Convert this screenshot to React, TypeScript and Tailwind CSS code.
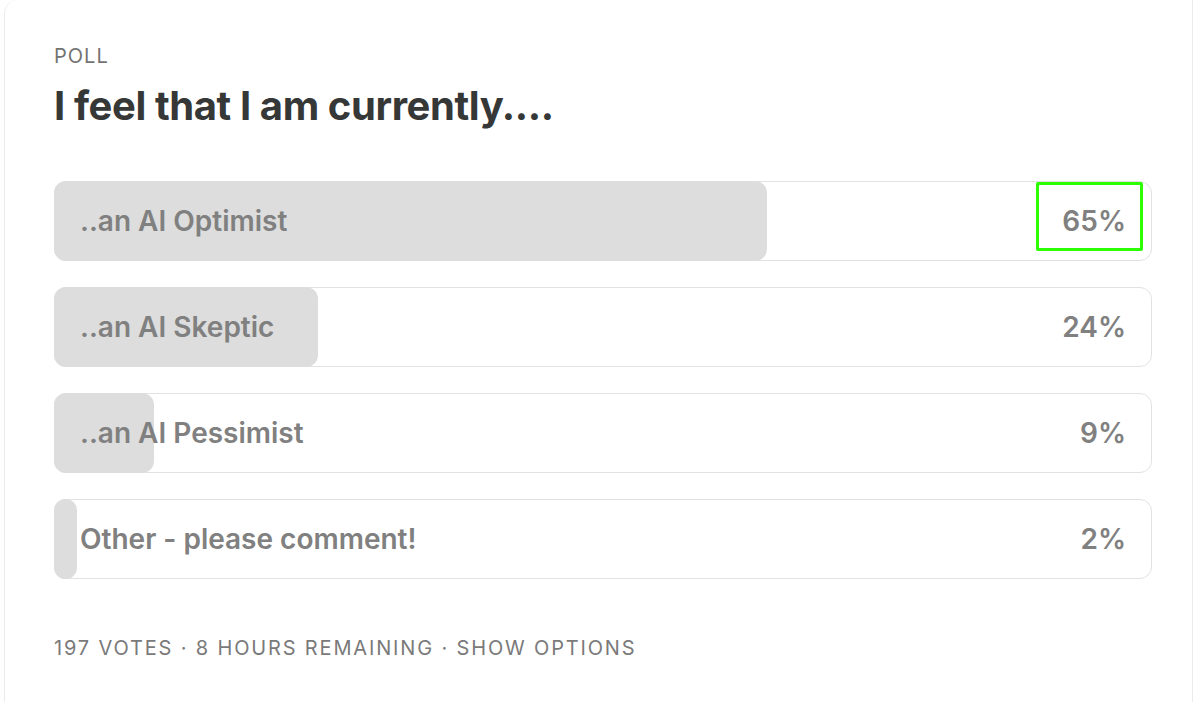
import React from 'react';

type Option = { label: string; pct: number; highlight?: boolean };

const options: Option[] = [
  { label: '..an AI Optimist', pct: 65, highlight: true },
  { label: '..an AI Skeptic', pct: 24 },
  { label: '..an AI Pessimist', pct: 9 },
  { label: 'Other - please comment!', pct: 2 },
];

const PollRow = ({ option }: { option: Option }) => (
  <div className="relative h-[80px] rounded-[12px] border border-[#e2e2e2] bg-white">
    <div
      className="absolute left-[-1px] top-[-1px] bottom-[-1px] rounded-[12px] bg-[#dddddd]"
      style={{ width: `calc(${option.pct}% + 1px)` }}
    />
    <div className="relative flex h-full items-center justify-between pl-[25px] pr-[25px]">
      <span className="text-[28px] font-semibold text-[#808080]">{option.label}</span>
      <span className="text-[28px] font-semibold text-[#808080]">{option.pct}%</span>
    </div>
    {option.highlight && (
      <div className="absolute left-[981px] top-0 h-[69px] w-[107px] rounded-[2px] border-[3px] border-[#2bff00]" />
    )}
  </div>
);

export default function App() {
  return (
    <div
      className="h-[702px] w-[1194px] overflow-hidden bg-white"
      style={{ fontFamily: 'Inter, "Noto Sans", sans-serif' }}
    >
      <div className="ml-[4px] h-[720px] w-[1189px] rounded-tl-[14px] border-x border-[#ebebeb] pl-[49px] pr-[40px] pt-[44px]">
        <div className="text-[20px] tracking-[0.05em] text-[#737373] leading-[24px]">POLL</div>
        <h1 className="mt-[15px] text-[40px] font-bold leading-[46px] tracking-[-0.01em] text-[#363737]">
          I feel that I am currently....
        </h1>
        <div className="mt-[52px] flex flex-col gap-[26px]">
          {options.map((o) => (
            <PollRow key={o.label} option={o} />
          ))}
        </div>
        <div className="mt-[57px] text-[20px] tracking-[0.092em] text-[#7a7a7a] leading-[24px]">
          197 VOTES · 8 HOURS REMAINING · SHOW OPTIONS
        </div>
      </div>
    </div>
  );
}
